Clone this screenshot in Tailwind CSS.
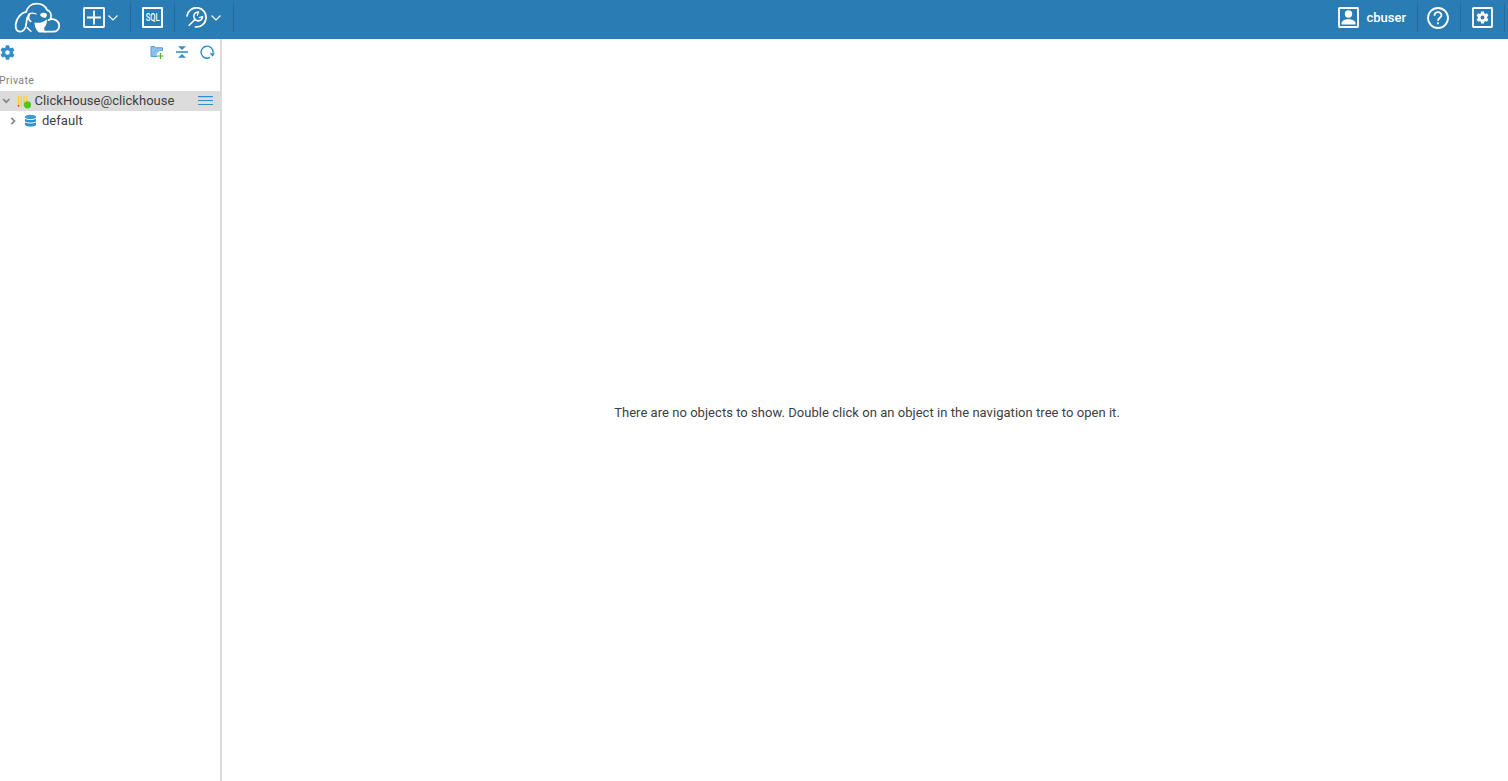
<!DOCTYPE html>
<html lang="en">
<head>
  <meta charset="UTF-8" />
  <meta name="viewport" content="width=device-width, initial-scale=1.0" />
  <title>CloudBeaver</title>
  <script src="https://cdn.jsdelivr.net/npm/@tailwindcss/browser@4"></script>
</head>
<body class="flex h-screen flex-col overflow-hidden bg-white font-[Roboto,sans-serif] text-[13px] tracking-[0.04px] text-[#404040]">

  <!-- Top bar -->
  <header class="flex h-[39px] shrink-0 items-start justify-between bg-[#2a7cb4] pt-[3px] text-white">
    <div class="flex h-[29px] items-center">
      <a href="#" class="mr-2.5 ml-3.5 block" aria-label="CloudBeaver">
        <svg class="block h-8 w-[47px]" viewBox="0 0 47 32" fill="none" stroke="#fff" stroke-width="1.800" stroke-linecap="round" stroke-linejoin="round">
          <path d="M12 9.800C7 10.800 2.500 16 1.700 22.500C1.300 27 3 29.700 5.800 29.700C9.500 29.700 11.800 26 12.300 21.500C12.600 18 13 15 15.500 12.200"/>
          <path d="M12.200 9.800C13.500 5 17.500 1.700 22.500 1.700C28 1.700 31.500 4.300 33 8C36 8.700 37.800 12 36.800 16.500"/>
          <path d="M34.500 18C39.500 15.500 45.300 18.800 45.200 24C45.100 27.300 42.500 29.700 39.500 29.700H31.500"/>
          <path d="M14.500 12.300C16 10.800 19.500 10.700 22 12" stroke-width="1.300"/>
          <path d="M15.500 12.500C14.300 15 14.500 18 16.800 19.500" stroke-width="1.500"/>
          <path d="M26.300 12.800C26.300 11 28.500 10.400 31 10.900C33.500 11.300 33.300 14 31.800 15.500C30.500 16.300 26.300 15 26.300 12.800Z" fill="#fff" stroke="none"/>
          <path d="M20.500 20.500C24.500 21.200 29.500 20.700 32.800 17.200C33.300 20.500 32.300 23.500 30.500 25.200C29.500 27 30.500 29 32.500 30.600H25.500C23 29.500 20.800 26 20.500 20.500Z" fill="#fff" stroke="none"/>
          <path d="M13 25.500C14.500 27.500 16.200 28.500 17 29.300" stroke-width="1.300"/>
        </svg>
      </a>
      <button class="flex h-[29px] w-[60px] items-center gap-[3px] border-r border-[#236b9e] pl-3">
        <svg class="h-[21px] w-[22px]" viewBox="0 0 22 21" fill="none" stroke="#fff" stroke-width="1.800">
          <rect x="1" y="1" width="20" height="19" rx="0.500"/>
          <path d="M11 3.500v14M4 10.500h14"/>
        </svg>
        <svg class="h-[6px] w-[10px]" viewBox="0 0 10 6" fill="none" stroke="#fff" stroke-width="1.100"><path d="M.5.5 5 5 9.500.5"/></svg>
      </button>
      <button class="flex h-[29px] w-[44px] items-center border-r border-[#236b9e] pl-[11px]">
        <span class="flex h-[21px] w-[21px] items-center justify-center rounded-[1px] border-2 border-white">
          <span class="scale-x-[.72] text-[10.500px] leading-[17px] font-medium tracking-normal">SQL</span>
        </span>
      </button>
      <button class="flex h-[29px] w-[59px] items-center gap-[3px] border-r border-[#236b9e] pl-[11px]">
        <svg class="h-[21px] w-[22px]" viewBox="0 0 22 21" fill="none" stroke="#fff" stroke-width="1.800" stroke-linecap="round" stroke-linejoin="round">
          <path d="M1 8.800A9.600 9.600 0 1 1 9.500 19.900"/>
          <path d="M3.200 18.300 9.300 12.300M12.500 5C8.500 4.800 6.500 8.500 8.500 11.800C10.800 15.300 16.200 14 16.500 9.500" stroke-width="1.600"/>
          <path d="M12.500 5 11.300 8.300M16.500 9.500 13.200 10.600" stroke-width="1.200"/>
        </svg>
        <svg class="h-[6px] w-[10px]" viewBox="0 0 10 6" fill="none" stroke="#fff" stroke-width="1.100"><path d="M.5.5 5 5 9.500.5"/></svg>
      </button>
    </div>

    <div class="flex h-[29px] items-center pr-[3px]">
      <button class="flex h-[29px] items-center gap-[7px] border-r border-[#236b9e] pr-[11px] font-medium tracking-normal">
        <svg class="h-[21px] w-[21px]" viewBox="0 0 21 21">
          <rect x="1" y="1" width="19" height="19" rx="0.500" fill="none" stroke="#fff" stroke-width="1.800"/>
          <circle cx="10.500" cy="7" r="3.700" fill="#fff"/>
          <path d="M3.500 17.500V16C3.500 13.800 7 12.200 10.500 12.200S17.500 13.800 17.500 16V17.500Z" fill="#fff"/>
        </svg>
        cbuser
      </button>
      <button class="flex h-[29px] w-[43px] items-center border-r border-[#236b9e] pl-[9px]">
        <svg class="h-[22px] w-[22px]" viewBox="0 0 22 22" fill="none" stroke="#fff" stroke-width="1.800">
          <circle cx="11" cy="11" r="10"/>
          <path d="M7.500 8.700C7.500 6.600 9 5.100 11 5.100S14.500 6.600 14.500 8.300C14.500 10.700 11 10.800 11 13.700"/>
          <path d="M11 15.200v2"/>
        </svg>
      </button>
      <button class="flex h-[29px] w-[44px] items-center border-r border-[#236b9e] pl-[11px]">
        <svg class="h-[21px] w-[21px]" viewBox="0 0 21 21">
          <rect x="1" y="1" width="19" height="19" rx="0.500" fill="none" stroke="#fff" stroke-width="1.800"/>
          <g transform="translate(3.300 3.300) scale(.6)">
            <path fill="#fff" d="M19.430 12.980a7.800 7.800 0 0 0 0-1.960l2.110-1.650a.5.5 0 0 0 .12-.64l-2-3.460a.5.5 0 0 0-.61-.22l-2.490 1a7.300 7.300 0 0 0-1.690-.98l-.38-2.650A.5.5 0 0 0 14 2h-4a.5.5 0 0 0-.49.420l-.38 2.650a7.700 7.700 0 0 0-1.690.98l-2.490-1a.5.5 0 0 0-.61.220l-2 3.460a.5.5 0 0 0 .12.640l2.110 1.650a7.900 7.900 0 0 0 0 1.960l-2.110 1.650a.5.5 0 0 0-.12.640l2 3.460c.12.220.39.300.61.220l2.490-1c.52.400 1.080.730 1.690.980l.38 2.650c.03.240.24.420.49.420h4c.25 0 .46-.18.490-.42l.38-2.650a7.700 7.700 0 0 0 1.690-.98l2.490 1c.23.090.49 0 .61-.22l2-3.460a.5.5 0 0 0-.12-.64ZM12 15.200a3.200 3.200 0 1 1 0-6.400 3.200 3.200 0 0 1 0 6.400Z"/>
          </g>
        </svg>
      </button>
    </div>
  </header>

  <div class="flex min-h-0 flex-1">
    <!-- Navigation tree -->
    <aside class="w-[222px] shrink-0 border-r-2 border-[#dcdcdc]">
      <div class="flex h-[26px] items-center justify-between pr-[4px]">
        <svg class="h-[15px] w-[15px]" viewBox="1.500 1.500 21 21">
          <path fill="#338ecc" d="M19.430 12.980a7.800 7.800 0 0 0 0-1.960l2.110-1.650a.5.5 0 0 0 .12-.64l-2-3.460a.5.5 0 0 0-.61-.22l-2.490 1a7.300 7.300 0 0 0-1.690-.98l-.38-2.650A.5.5 0 0 0 14 2h-4a.5.5 0 0 0-.49.420l-.38 2.650a7.700 7.700 0 0 0-1.690.98l-2.490-1a.5.5 0 0 0-.61.220l-2 3.460a.5.5 0 0 0 .12.640l2.110 1.650a7.900 7.900 0 0 0 0 1.960l-2.110 1.650a.5.5 0 0 0-.12.640l2 3.460c.12.220.39.300.61.220l2.490-1c.52.400 1.080.730 1.690.980l.38 2.650c.03.240.24.420.49.420h4c.25 0 .46-.18.490-.42l.38-2.650a7.700 7.700 0 0 0 1.690-.98l2.490 1c.23.090.49 0 .61-.22l2-3.460a.5.5 0 0 0-.12-.64ZM12 15.200a3.200 3.200 0 1 1 0-6.400 3.200 3.200 0 0 1 0 6.400Z"/>
        </svg>
        <div class="flex items-center gap-[11px]">
          <svg class="h-[14px] w-[14px]" viewBox="0 0 14 14" fill="none">
            <path d="M1 1.500H4.500L5.500 2.800H12.500V6H9.500L7 8.500V11.500H1Z" fill="#8ec4ec"/>
            <path d="M7 11.500H1V1.500H4.500L5.500 2.800H12.500V6" stroke="#4f9fd8"/>
            <path d="M2 11.500 5 5.500H12.500" stroke="#6fb3e2" stroke-width=".8"/>
            <path d="M10.500 8v6M7.500 11h6" stroke="#4db51f" stroke-width="1.200"/>
          </svg>
          <svg class="h-[14px] w-[14px]" viewBox="0 0 14 14">
            <path d="M1 7h12" stroke="#338ecc" stroke-width="1.600"/>
            <path d="M3 1.200H11L7 5ZM3 12.800H11L7 9Z" fill="#338ecc"/>
          </svg>
          <svg class="h-[16px] w-[16px]" viewBox="0 0 16 16">
            <path d="M10 13.400A6 6 0 1 1 13 9" fill="none" stroke="#338ecc" stroke-width="1.400"/>
            <path d="M9.600 9.200H15L12.500 12.800Z" fill="#338ecc"/>
          </svg>
        </div>
      </div>

      <div class="mt-[6px] mb-px flex h-[19px] items-center pt-[1px] text-[10.500px] tracking-[0.4px] text-[#808080]"><span class="-ml-px">Private</span></div>

      <ul>
        <li class="flex h-5 items-center bg-[#dcdcdc] pr-[7px] pl-[2px]">
          <svg class="h-[8px] w-[8px] shrink-0" viewBox="0 0 8 8" fill="none" stroke="#858585" stroke-width="1.700"><path d="m1 2 3.200 3.200L7.400 2"/></svg>
          <svg class="ml-[7px] h-[15px] w-[15px] shrink-0" viewBox="0 0 15 15">
            <path d="M1.500 1.500v10M4.200 1.500v11M7 1.500v11M9.700 1.500v11" stroke="#fc3" stroke-width="1.300"/>
            <path d="M.8 11h1.400v1.700H.8Z" fill="#f33"/>
            <circle cx="10.500" cy="10.800" r="3.600" fill="#52c41a"/>
          </svg>
          <span class="ml-[2.500px] flex-1">ClickHouse@clickhouse</span>
          <svg class="h-[10px] w-[15px]" viewBox="0 0 15 10" fill="none" stroke="#338ecc" stroke-width="1.100"><path d="M0 .6h15M0 4.500h15M0 8.500h15"/></svg>
        </li>
        <li class="flex h-5 items-center pl-[9px]">
          <svg class="h-[8px] w-[8px]" viewBox="0 0 8 8" fill="none" stroke="#858585" stroke-width="1.700"><path d="m2.300.8 3.200 3.200-3.200 3.200"/></svg>
          <svg class="-mt-px ml-[7px] h-[13px] w-[13px]" viewBox="0 0 13 13">
            <path d="M1 2.700V10.400C1 13.200 12 13.200 12 10.400V2.700Z" fill="#338ecc"/>
            <ellipse cx="6.500" cy="2.700" rx="5.500" ry="2" fill="#3d9ad8"/>
            <path d="M.8 4.300C2.800 6 10.200 6 12.200 4.300M.8 7.800C2.800 9.500 10.200 9.500 12.200 7.800" fill="none" stroke="#fff" stroke-width="1"/>
          </svg>
          <span class="ml-[5px]">default</span>
        </li>
      </ul>
    </aside>

    <!-- Empty workspace -->
    <main class="flex flex-1 items-center justify-center">
      <p class="mt-[5px] ml-[4px] whitespace-nowrap">There are no objects to show. Double click on an object in the navigation tree to open it.</p>
    </main>
  </div>

</body>
</html>
